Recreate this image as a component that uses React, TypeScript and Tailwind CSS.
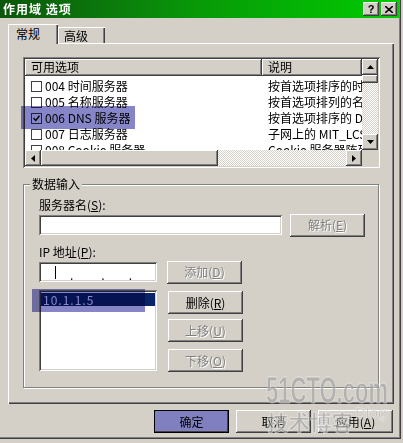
import { FC, ReactNode } from "react";

const raised =
  "bg-[#d4d0c8] shadow-[inset_-1px_-1px_#404040,inset_1px_1px_#ffffff,inset_-2px_-2px_#808080,inset_2px_2px_#d4d0c8]";
const sunken =
  "bg-white shadow-[inset_1px_1px_#808080,inset_-1px_-1px_#ffffff,inset_2px_2px_#404040,inset_-2px_-2px_#d4d0c8]";
const grayText = "text-[#808080] [text-shadow:1px_1px_0_#ffffff]";
const checker =
  "bg-[repeating-conic-gradient(#ffffff_0%_25%,#d4d0c8_0%_50%)] bg-[length:2px_2px]";

type BtnProps = {
  children: ReactNode;
  off?: boolean;
  className?: string;
};

const Btn: FC<BtnProps> = ({ children, off, className = "" }) => (
  <div
    className={`flex items-center justify-center w-[75px] h-[23px] leading-[14px] ${raised} ${
      off ? grayText : "text-black"
    } ${className}`}
  >
    {children}
  </div>
);

const Arrow: FC<{ dir: "up" | "down" | "left" | "right" }> = ({ dir }) => {
  const pts = {
    up: "0,4 7,4 3.5,0",
    down: "0,0 7,0 3.5,4",
    left: "4,0 4,7 0,3.5",
    right: "0,0 0,7 4,3.5",
  }[dir];
  const vertical = dir === "up" || dir === "down";
  return (
    <div className={`flex items-center justify-center w-[16px] h-[16px] shrink-0 ${raised}`}>
      <svg width={vertical ? 7 : 4} height={vertical ? 4 : 7}>
        <polygon points={pts} fill="#000" />
      </svg>
    </div>
  );
};

const CheckBox: FC<{ checked?: boolean }> = ({ checked }) => (
  <div className="w-[11px] h-[11px] shrink-0 bg-white border border-[#404040] flex items-center justify-center">
    {checked && (
      <svg width="7" height="7" viewBox="0 0 7 7">
        <path d="M0.5 3 L2.8 5.5 L6.5 0.8" stroke="#000" strokeWidth="1.4" fill="none" />
      </svg>
    )}
  </div>
);

const rows = [
  { code: "004", name: "时间服务器", desc: "按首选项排序的时间服务器列表" },
  { code: "005", name: "名称服务器", desc: "按首选项排列的名称服务器列表" },
  { code: "006", name: "DNS 服务器", desc: "按首选项排序的 DNS 服务器列表", checked: true },
  { code: "007", name: "日志服务器", desc: "子网上的 MIT_LCS 日志服务器" },
  { code: "008", name: "Cookie 服务器", desc: "Cookie 服务器阵列" },
];

const OptionList: FC = () => (
  <div className={`w-[357px] h-[111px] p-[2px] flex flex-col ${sunken}`}>
    <div className="flex h-[91px]">
      <div className="w-[337px] overflow-hidden bg-white">
        <div className="flex h-[17px] leading-[15px]">
          <div className={`w-[237px] pl-[6px] ${raised}`}>可用选项</div>
          <div className={`flex-1 pl-[6px] ${raised}`}>说明</div>
        </div>
        <div className="pt-[2px]">
          {rows.map((r) => (
            <div key={r.code} className="flex items-center h-[16px] whitespace-nowrap">
              <div className="w-[237px] flex items-center pl-[6px] gap-[3px]">
                <CheckBox checked={r.checked} />
                <span>
                  {r.code} {r.name}
                </span>
              </div>
              <div className="flex-1 pl-[6px] overflow-hidden">{r.desc}</div>
            </div>
          ))}
        </div>
      </div>
      <div className="w-[16px] flex flex-col">
        <Arrow dir="up" />
        <div className={`h-[8px] ${raised}`} />
        <div className={`flex-1 ${checker}`} />
        <Arrow dir="down" />
      </div>
    </div>
    <div className="flex h-[16px]">
      <Arrow dir="left" />
      <div className={`w-[177px] ${raised}`} />
      <div className={`flex-1 ${checker}`} />
      <Arrow dir="right" />
      <div className="w-[16px] bg-[#d4d0c8]" />
    </div>
  </div>
);

const DataGroup: FC = () => (
  <div className="relative mt-[16px] w-[356px] h-[204px] border border-[#808080] shadow-[inset_1px_1px_#ffffff,1px_1px_#ffffff] pl-[15px] pt-[13px]">
    <div className="absolute left-[6px] -top-[8px] px-[2px] bg-[#d4d0c8] leading-[14px]">
      数据输入
    </div>
    <div className="leading-[14px]">
      服务器名(<u>S</u>):
    </div>
    <div className="flex items-center h-[22px] mt-[2px]">
      <div className={`w-[243px] h-[20px] ${sunken}`} />
      <Btn off className="ml-[8px] h-[22px]">
        解析(<u>E</u>)
      </Btn>
    </div>
    <div className="leading-[14px] mt-[9px]">
      IP 地址(<u>P</u>):
    </div>
    <div className="flex items-center h-[22px] mt-[2px]">
      <div className={`w-[118px] h-[20px] flex items-center ${sunken}`}>
        <div className="ml-[16px] w-px h-[13px] bg-black" />
        <span className="ml-[14px] mt-[6px] leading-[8px]">.</span>
        <span className="ml-[28px] mt-[6px] leading-[8px]">.</span>
        <span className="ml-[24px] mt-[6px] leading-[8px]">.</span>
      </div>
      <Btn off className="ml-[10px] h-[22px]">
        添加(<u>D</u>)
      </Btn>
    </div>
    <div className="flex mt-[7px]">
      <div className={`w-[118px] h-[81px] p-[2px] ${sunken}`}>
        <div className="mt-px h-[13px] leading-[13px] bg-[#0a246a] text-white pl-[2px] tracking-[1px]">
          10.1.1.5
        </div>
      </div>
      <div className="flex flex-col ml-[11px]">
        <Btn className="mt-px">
          删除(<u>R</u>)
        </Btn>
        <Btn off className="mt-[5px]">
          上移(<u>U</u>)
        </Btn>
        <Btn off className="mt-[7px]">
          下移(<u>O</u>)
        </Btn>
      </div>
    </div>
  </div>
);

const App: FC = () => {
  return (
    <div className="relative w-[403px] h-[443px] overflow-hidden bg-[#d4d0c8] text-[12px] text-black font-['Noto_Sans_CJK_SC',sans-serif]">
      <div className="w-[401px] h-[439px] shadow-[inset_-1px_-1px_#404040,inset_-2px_-2px_#808080]">
        <div className="flex items-center justify-between w-[399px] h-[18px] pl-[3px] pr-[2px] bg-linear-to-r from-[#0b560b] via-[#079a07] to-[#00cc00]">
          <span className="text-white font-bold tracking-[1px] leading-[14px]">作用域 选项</span>
          <div className="flex gap-[2px]">
            <div className={`w-[16px] h-[14px] flex items-center justify-center font-bold text-[11px] leading-none font-['Liberation_Sans',sans-serif] ${raised}`}>
              ?
            </div>
            <div className={`w-[16px] h-[14px] flex items-center justify-center ${raised}`}>
              <svg width="8" height="7" viewBox="0 0 8 7">
                <path d="M0 0 L8 7 M8 0 L0 7" stroke="#000" strokeWidth="1.6" />
              </svg>
            </div>
          </div>
        </div>

        <div className="pl-[8px]">
          <div className="flex items-end h-[19px] mt-[6px]">
            <div className="relative z-10 w-[50px] h-[20px] -mb-px pl-[8px] pt-[3px] leading-[14px] bg-[#d4d0c8] shadow-[inset_1px_1px_#ffffff,inset_-1px_0_#404040,inset_-2px_0_#808080]">
              常规
            </div>
            <div className="w-[47px] h-[16px] pl-[6px] pt-[2px] leading-[14px] shadow-[inset_1px_1px_#ffffff,inset_-1px_0_#404040,inset_-2px_0_#808080]">
              高级
            </div>
          </div>

          <div className="w-[386px] h-[361px] pt-[14px] pl-[15px] shadow-[inset_1px_1px_#ffffff,inset_-1px_-1px_#404040,inset_-2px_-2px_#808080]">
            <OptionList />
            <DataGroup />
          </div>

          <div className="flex justify-end gap-[7px] w-[386px] mt-[6px] pr-px">
            <div className="flex items-center justify-center w-[75px] h-[23px] bg-[#8080c0] border border-black shadow-[inset_-1px_-1px_#404040]">
              确定
            </div>
            <Btn>取消</Btn>
            <Btn>
              应用(<u>A</u>)
            </Btn>
          </div>
        </div>
      </div>

      {/* highlight marks drawn over the screenshot */}
      <div className="absolute left-[21px] top-[106px] w-[114px] h-[23px] bg-[#8585c8] mix-blend-multiply" />
      <div className="absolute left-[32px] top-[289px] w-[113px] h-[23px] bg-[#8585c8] mix-blend-multiply" />

      {/* watermark */}
      <svg
        className="absolute left-[264px] top-[372px] pointer-events-none"
        width="136"
        height="66"
      >
        <g fill="#9c9c9c" fillOpacity="0.6" stroke="#ffffff" strokeOpacity="0.5" strokeWidth="0.8">
          <text
            x="2"
            y="31"
            fontSize="36"
            fontWeight="bold"
            fontFamily="Liberation Sans, sans-serif"
            textLength="122"
            lengthAdjust="spacingAndGlyphs"
          >
            51CTO.com
          </text>
          <text
            x="3"
            y="58"
            fontSize="21"
            fontWeight="bold"
            fontFamily="Noto Sans CJK SC, sans-serif"
            textLength="86"
            lengthAdjust="spacingAndGlyphs"
          >
            技术博客
          </text>
          <text
            x="91"
            y="46"
            fontSize="15"
            fontFamily="Liberation Sans, sans-serif"
            textLength="32"
            lengthAdjust="spacingAndGlyphs"
          >
            Blog
          </text>
        </g>
      </svg>
    </div>
  );
};

export default App;
